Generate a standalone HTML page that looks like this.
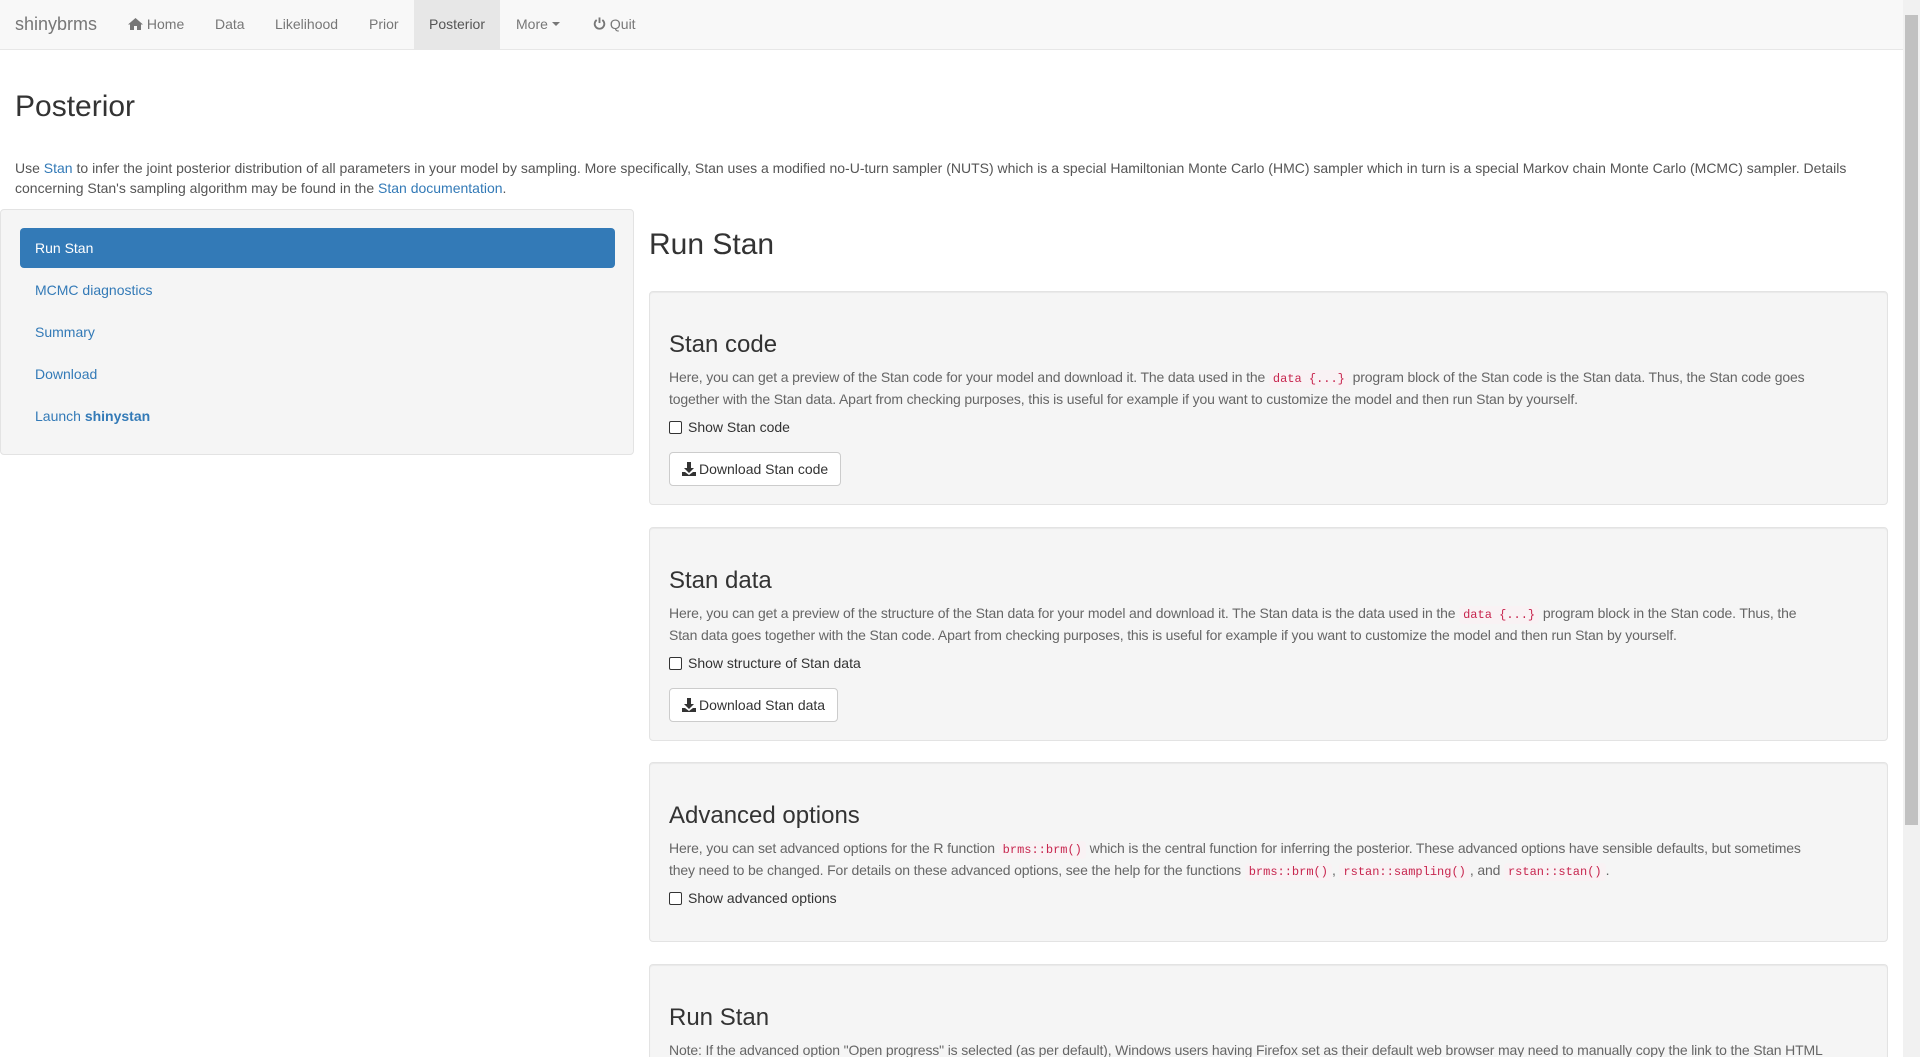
<!DOCTYPE html>
<html><head><meta charset="utf-8"><style>
*{box-sizing:border-box}
html{overflow:hidden;width:1920px;height:1057px}
html,body{margin:0;padding:0}
body{width:1920px;height:1057px;overflow:hidden;font-family:"Liberation Sans",Arial,sans-serif;font-size:14px;line-height:20px;color:#333;background:#fff;position:relative}
a{color:#337ab7;text-decoration:none}
.nav{position:absolute;left:0;top:0;width:1903px;height:50px;background:#f8f8f8;border-bottom:1px solid #e7e7e7}
.nav span{position:absolute;top:0;height:49px;line-height:49px;color:#777;font-size:14px}
.brand{font-size:18px!important;color:#777}
.act{background:#e7e7e7;color:#555!important;text-align:center}
h2{font-size:30px;font-weight:500;margin:0;line-height:33px;position:absolute}
h3{font-size:24px;font-weight:500;margin:0;line-height:26px;position:absolute;left:19px;color:#333}
.top{position:absolute;left:15px;top:158px;width:1880px;color:#555}
.side{position:absolute;left:0;top:209px;width:634px;height:246px;background:#f5f5f5;border:1px solid #e3e3e3;border-radius:4px}
.pill{position:absolute;left:19px;width:595px;height:40px;line-height:40px;padding-left:15px;border-radius:4px;color:#337ab7}
.pill.on{background:#337ab7;color:#fff}
.well{position:absolute;left:649px;width:1239px;background:#f5f5f5;border:1px solid #e3e3e3;border-radius:4px;box-shadow:inset 0 1px 1px rgba(0,0,0,.05);overflow:hidden}
.well p{position:absolute;left:19px;margin:0;width:1200px;color:#666;font-size:14px;letter-spacing:-0.15px}
code{font-family:"Liberation Mono",monospace;font-weight:normal;font-size:12px;color:#c7254e;background:#f9f2f4;padding:2px 4px;border-radius:4px;letter-spacing:0}
.cb{position:absolute;left:19px;color:#333}
.cb i{display:inline-block;width:13px;height:13px;border:1px solid #333;border-radius:2px;vertical-align:-2px;margin-right:6px;background:#fff}
.btn{position:absolute;left:19px;height:34px;line-height:32px;padding:0 12px;background:#fff;border:1px solid #ccc;border-radius:4px;color:#333}
.btn svg{vertical-align:-2px;margin-right:3px}
.sb{position:absolute;right:0;top:0;width:17px;height:1057px;background:#f1f1f1}
.sb div{position:absolute;left:2px;top:15px;width:13px;height:810px;background:#c1c1c1}
</style></head><body>
<div class="nav">
<span class="brand" style="left:15px">shinybrms</span>
<span style="left:128px"><svg width="15" height="12" viewBox="0 0 15 12" style="vertical-align:-1px"><path d="M7.5 0L0 6.5h2V12h4V8h3v4h4V6.5h2z" fill="#777"/></svg> Home</span>
<span style="left:215px">Data</span>
<span style="left:275px">Likelihood</span>
<span style="left:369px">Prior</span>
<span class="act" style="left:414px;width:86px">Posterior</span>
<span style="left:516px">More <svg width="8" height="5" viewBox="0 0 8 5" style="vertical-align:2px"><path d="M0 0h8L4 4z" fill="#777"/></svg></span>
<span style="left:593px"><svg width="13" height="13" viewBox="0 0 14 14" style="vertical-align:-1px"><path d="M4 3.2A5.2 5.2 0 1 0 10 3.2" fill="none" stroke="#777" stroke-width="2"/><path d="M7 0.5v6" stroke="#777" stroke-width="2"/></svg> Quit</span>
</div>
<h2 style="left:15px;top:90px">Posterior</h2>
<div class="top">Use <a>Stan</a> to infer the joint posterior distribution of all parameters in your model by sampling. More specifically, Stan uses a modified no-U-turn sampler (NUTS) which is a special Hamiltonian Monte Carlo (HMC) sampler which in turn is a special Markov chain Monte Carlo (MCMC) sampler. Details<br>concerning Stan's sampling algorithm may be found in the <a>Stan documentation</a>.</div>
<div class="side">
<div class="pill on" style="top:18px">Run Stan</div>
<div class="pill" style="top:60px">MCMC diagnostics</div>
<div class="pill" style="top:102px">Summary</div>
<div class="pill" style="top:144px">Download</div>
<div class="pill" style="top:186px">Launch <b>shinystan</b></div>
</div>
<h2 style="left:649px;top:228px">Run Stan</h2>

<div class="well" style="top:291px;height:214px">
<h3 style="top:40px">Stan code</h3>
<p style="top:75px">Here, you can get a preview of the Stan code for your model and download it. The data used in the <code>data {...}</code> program block of the Stan code is the Stan data. Thus, the Stan code goes<br>together with the Stan data. Apart from checking purposes, this is useful for example if you want to customize the model and then run Stan by yourself.</p>
<div class="cb" style="top:125px"><i></i>Show Stan code</div>
<div class="btn" style="top:160px"><svg width="14" height="14" viewBox="0 0 14 14"><path d="M5 0h4v6h3L7 11 2 6h3z" fill="#333"/><path d="M0 10h3l4 3 4-3h3v4H0z" fill="#333"/></svg>Download Stan code</div>
</div>

<div class="well" style="top:527px;height:214px">
<h3 style="top:40px">Stan data</h3>
<p style="top:75px">Here, you can get a preview of the structure of the Stan data for your model and download it. The Stan data is the data used in the <code>data {...}</code> program block in the Stan code. Thus, the<br>Stan data goes together with the Stan code. Apart from checking purposes, this is useful for example if you want to customize the model and then run Stan by yourself.</p>
<div class="cb" style="top:125px"><i></i>Show structure of Stan data</div>
<div class="btn" style="top:160px"><svg width="14" height="14" viewBox="0 0 14 14"><path d="M5 0h4v6h3L7 11 2 6h3z" fill="#333"/><path d="M0 10h3l4 3 4-3h3v4H0z" fill="#333"/></svg>Download Stan data</div>
</div>

<div class="well" style="top:762px;height:180px">
<h3 style="top:40px">Advanced options</h3>
<p style="top:75px">Here, you can set advanced options for the R function <code>brms::brm()</code> which is the central function for inferring the posterior. These advanced options have sensible defaults, but sometimes<br>they need to be changed. For details on these advanced options, see the help for the functions <code>brms::brm()</code>, <code>rstan::sampling()</code>, and <code>rstan::stan()</code>.</p>
<div class="cb" style="top:125px"><i></i>Show advanced options</div>
</div>

<div class="well" style="top:964px;height:93px;border-bottom:none;border-radius:4px 4px 0 0">
<h3 style="top:40px">Run Stan</h3>
<p style="top:75px">Note: If the advanced option "Open progress" is selected (as per default), Windows users having Firefox set as their default web browser may need to manually copy the link to the Stan HTML</p>
</div>
<div class="sb"><div></div></div>
</body></html>
